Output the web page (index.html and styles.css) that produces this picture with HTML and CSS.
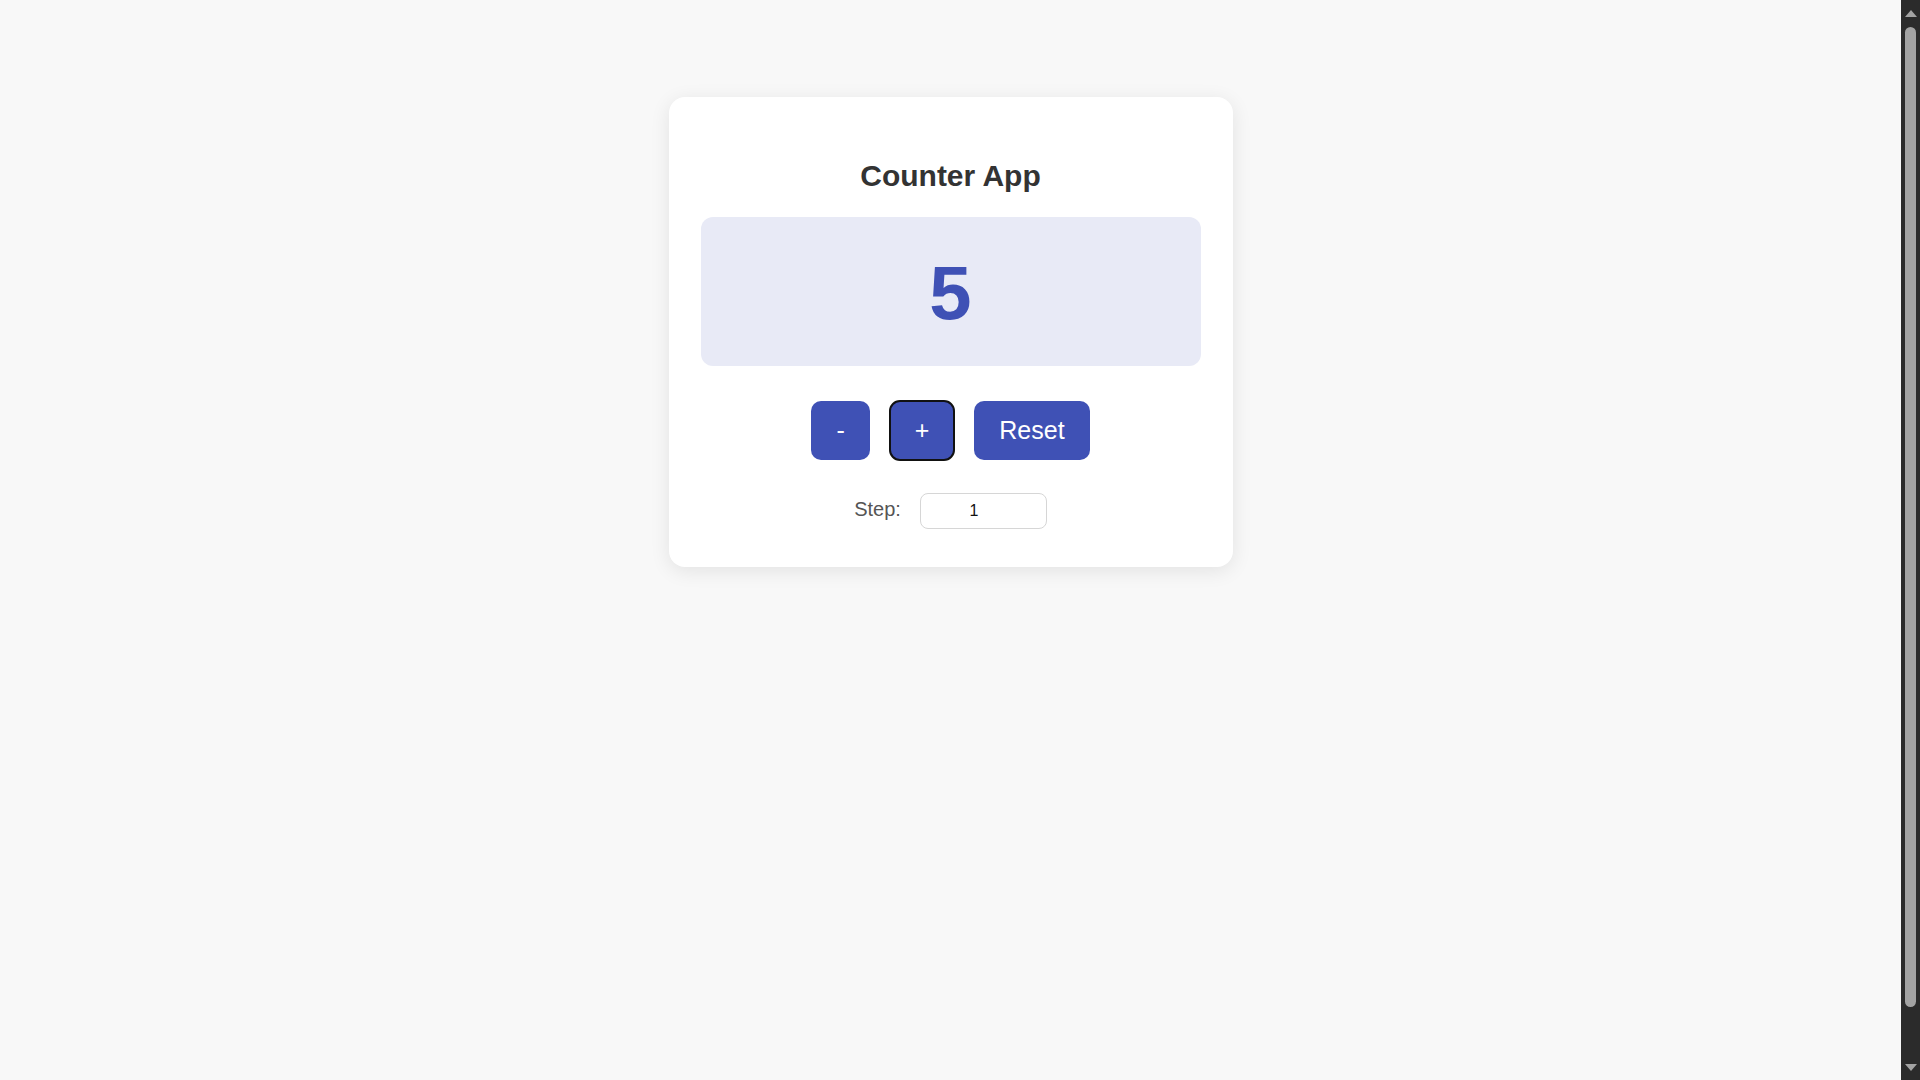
FILE: index.html
```html
<!DOCTYPE html>
<html lang="en">
<head>
<meta charset="utf-8">
<title>Counter App</title>
<link rel="stylesheet" href="styles.css">
</head>
<body>
<main class="page">
  <section class="card">
    <h1 class="title">Counter App</h1>
    <div class="display">5</div>
    <div class="controls">
      <button class="btn" type="button">-</button>
      <button class="btn is-focused" type="button">+</button>
      <button class="btn" type="button">Reset</button>
    </div>
    <div class="step">
      <label class="step-label" for="step">Step:</label>
      <input class="step-input" id="step" type="number" value="1">
    </div>
  </section>
</main>
<div class="scrollbar" aria-hidden="true">
  <span class="sb-arrow sb-up"></span>
  <span class="sb-thumb"></span>
  <span class="sb-arrow sb-down"></span>
</div>
</body>
</html>
```

FILE: styles.css
```css
html, body {
  margin: 0;
  padding: 0;
  overflow: hidden;
}

body {
  background: #f8f8f8;
  font-family: "Liberation Sans", Arial, sans-serif;
  color: #333;
}

.page {
  box-sizing: border-box;
  min-height: 100vh;
  margin-right: 19px;
  padding-top: 97px;
  display: flex;
  justify-content: center;
  align-items: flex-start;
}

.card {
  width: 500px;
  padding: 32px 32px 38px;
  background: #ffffff;
  border-radius: 16px;
  box-shadow: 0 4px 20px rgba(0, 0, 0, 0.09);
  text-align: center;
}

.title {
  margin: 29px 0 24px;
  font-size: 30px;
  line-height: 35px;
  font-weight: bold;
  color: #333;
}

.display {
  padding: 33px 0 31px;
  font-size: 76px;
  line-height: 85px;
  font-weight: bold;
  color: #3f51b5;
  background: #e8eaf6;
  border-radius: 12px;
}

.controls {
  margin-top: 35px;
  display: flex;
  justify-content: center;
  gap: 20px;
}

.btn {
  font-family: "Liberation Sans", Arial, sans-serif;
  font-size: 25px;
  line-height: 29px;
  padding: 15px 25px;
  border: none;
  border-radius: 10px;
  background: #3f51b5;
  color: #ffffff;
  cursor: pointer;
}

.btn.is-focused {
  outline: 2px solid #111111;
  outline-offset: -1px;
}

.step {
  margin-top: 33px;
  display: flex;
  justify-content: center;
  align-items: baseline;
  gap: 19px;
}

.step-label {
  font-size: 20px;
  color: #555;
}

.step-input {
  box-sizing: border-box;
  width: 127px;
  height: 36px;
  padding: 0 8px 0 4px;
  border: 1px solid #d6d6d6;
  border-radius: 8px;
  font-family: "Liberation Sans", Arial, sans-serif;
  font-size: 16px;
  color: #111;
  text-align: center;
  background: #fff;
}

.scrollbar {
  position: fixed;
  top: 0;
  right: 0;
  bottom: 0;
  width: 19px;
  box-sizing: border-box;
  padding: 10px 0 9px;
  background: #2b2b2b;
  display: flex;
  flex-direction: column;
  align-items: center;
}

.sb-arrow {
  width: 0;
  height: 0;
  border-left: 6px solid transparent;
  border-right: 6px solid transparent;
}

.sb-up {
  border-bottom: 7px solid #a3a3a3;
}

.sb-down {
  margin-top: auto;
  border-top: 7px solid #a3a3a3;
}

.sb-thumb {
  margin-top: 10px;
  width: 11px;
  height: 980px;
  border-radius: 6px;
  background: #a3a3a3;
}
```
